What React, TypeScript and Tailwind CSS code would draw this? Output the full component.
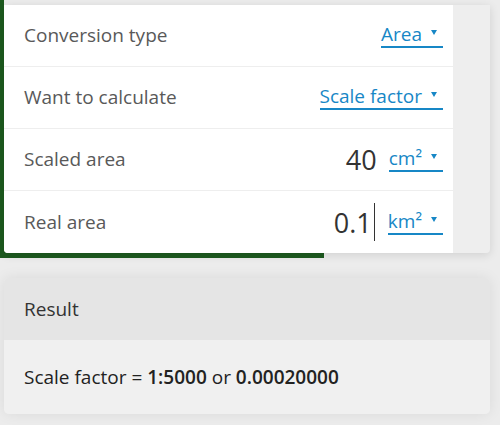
import React from "react";

const font = { fontFamily: '"Open Sans", "Noto Sans", sans-serif' };

function Caret() {
  return (
    <svg width="6" height="5" viewBox="0 0 6 5" className="ml-[9px] mr-[6px] mt-[-4px] inline-block">
      <path d="M0 0 L6 0 L3 5 Z" fill="#1787c6" />
    </svg>
  );
}

function Pick({ children }: { children: React.ReactNode }) {
  return (
    <span className="inline-flex items-center border-b-2 border-[#1787c6] text-[19px] leading-[23px] text-[#1787c6]">
      {children}
      <Caret />
    </span>
  );
}

function Row({ label, children, last }: { label: string; children: React.ReactNode; last?: boolean }) {
  return (
    <div
      className={
        "flex h-[62px] items-center justify-between pl-[20px] pr-[10px] " +
        (last ? "" : "border-b border-[#eeeeee]")
      }
    >
      <span className="text-[19px] text-[#595959]">{label}</span>
      <div className="flex items-center">{children}</div>
    </div>
  );
}

export default function App() {
  return (
    <div className="relative h-[425px] w-[500px] overflow-hidden bg-[#ececec]" style={font}>
      <div className="relative">
        {/* green panel peeking out from behind the form card */}
        <div className="absolute left-0 top-0 h-[258px] w-[4px] bg-[#1d5a1f]" />
        <div className="absolute left-0 top-[5px] h-[253px] w-[324px] bg-[#1d5a1f]" />
        <div className="relative ml-[4px] pt-[5px]">
          <div className="w-[486px] overflow-hidden rounded-b-[4px] bg-[#eeeeee] shadow-[0_2px_10px_rgba(0,0,0,0.12)]">
            <div className="w-[449px] bg-white">
              <Row label="Conversion type">
                <Pick>Area</Pick>
              </Row>
              <Row label="Want to calculate">
                <Pick>Scale factor</Pick>
              </Row>
              <Row label="Scaled area">
                <span className="mr-[12px] text-[27px] leading-none text-[#333333]">40</span>
                <Pick>cm²</Pick>
              </Row>
              <Row label="Real area" last>
                <span className="flex items-center">
                  <span className="text-[27px] leading-none text-[#333333]">0.1</span>
                  <span className="ml-[2px] mr-[13px] h-[38px] w-[1px] bg-[#333333]" />
                </span>
                <Pick>km²</Pick>
              </Row>
            </div>
          </div>
        </div>
      </div>

      <div className="ml-[4px] mt-[25px] w-[486px] overflow-hidden rounded-[5px] shadow-[0_0_14px_rgba(0,0,0,0.08)]">
        <div className="flex h-[62px] items-center bg-[#e5e5e5] pl-[20px] text-[19px] text-[#333333]">Result</div>
        <div className="flex h-[74px] items-center bg-[#f0f0f0] pl-[20px] text-[19px] text-[#222222]">
          <span>
            Scale factor = <b className="font-semibold">1:5000</b> or <b className="font-semibold">0.00020000</b>
          </span>
        </div>
      </div>
    </div>
  );
}
